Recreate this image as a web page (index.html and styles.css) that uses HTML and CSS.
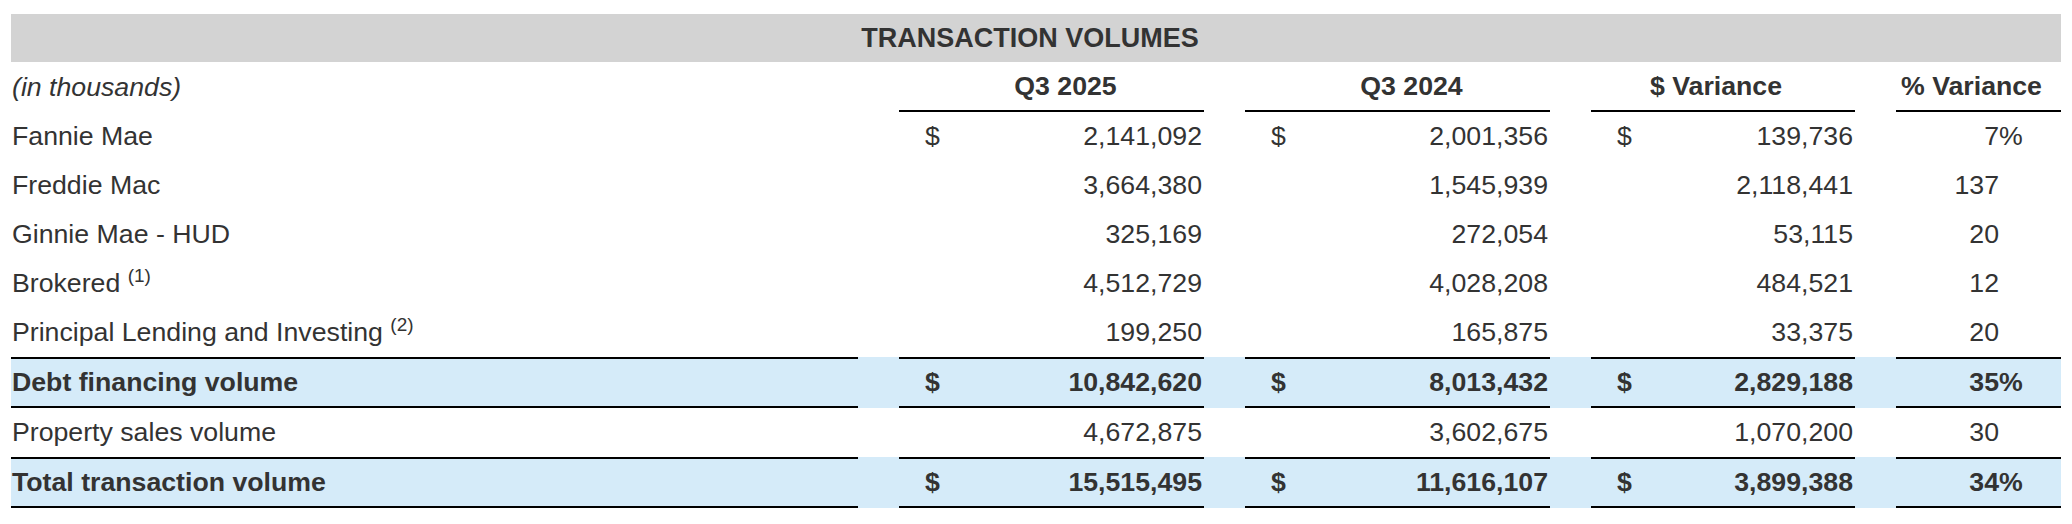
FILE: index.html
```html
<!DOCTYPE html>
<html lang="en">
<head>
<meta charset="utf-8">
<title>Transaction Volumes</title>
<link rel="stylesheet" href="styles.css">
</head>
<body>
<div class="page">
  <div class="title">TRANSACTION VOLUMES</div>

  <div class="row head">
    <div class="cell label italic">(in thousands)</div>
    <div class="cell colhead shift-r">Q3 2025</div>
    <div class="cell colhead shift-r">Q3 2024</div>
    <div class="cell colhead shift-l">$ Variance</div>
    <div class="cell colhead shift-l">% Variance</div>
  </div>

  <div class="row">
    <div class="cell label">Fannie Mae</div>
    <div class="cell num"><span>$</span><span>2,141,092</span></div>
    <div class="cell num"><span>$</span><span>2,001,356</span></div>
    <div class="cell num"><span>$</span><span>139,736</span></div>
    <div class="cell pctcell"><span>7</span><span class="pct">%</span></div>
  </div>

  <div class="row">
    <div class="cell label">Freddie Mac</div>
    <div class="cell num"><span></span><span>3,664,380</span></div>
    <div class="cell num"><span></span><span>1,545,939</span></div>
    <div class="cell num"><span></span><span>2,118,441</span></div>
    <div class="cell pctcell"><span>137</span><span class="pct"></span></div>
  </div>

  <div class="row">
    <div class="cell label">Ginnie Mae - HUD</div>
    <div class="cell num"><span></span><span>325,169</span></div>
    <div class="cell num"><span></span><span>272,054</span></div>
    <div class="cell num"><span></span><span>53,115</span></div>
    <div class="cell pctcell"><span>20</span><span class="pct"></span></div>
  </div>

  <div class="row">
    <div class="cell label"><span>Brokered <sup class="note">(1)</sup></span></div>
    <div class="cell num"><span></span><span>4,512,729</span></div>
    <div class="cell num"><span></span><span>4,028,208</span></div>
    <div class="cell num"><span></span><span>484,521</span></div>
    <div class="cell pctcell"><span>12</span><span class="pct"></span></div>
  </div>

  <div class="row">
    <div class="cell label"><span>Principal Lending and Investing <sup class="note">(2)</sup></span></div>
    <div class="cell num"><span></span><span>199,250</span></div>
    <div class="cell num"><span></span><span>165,875</span></div>
    <div class="cell num"><span></span><span>33,375</span></div>
    <div class="cell pctcell"><span>20</span><span class="pct"></span></div>
  </div>

  <div class="row total">
    <div class="cell label">Debt financing volume</div>
    <div class="cell num"><span>$</span><span>10,842,620</span></div>
    <div class="cell num"><span>$</span><span>8,013,432</span></div>
    <div class="cell num"><span>$</span><span>2,829,188</span></div>
    <div class="cell pctcell"><span>35</span><span class="pct">%</span></div>
  </div>

  <div class="row">
    <div class="cell label">Property sales volume</div>
    <div class="cell num"><span></span><span>4,672,875</span></div>
    <div class="cell num"><span></span><span>3,602,675</span></div>
    <div class="cell num"><span></span><span>1,070,200</span></div>
    <div class="cell pctcell"><span>30</span><span class="pct"></span></div>
  </div>

  <div class="row total">
    <div class="cell label">Total transaction volume</div>
    <div class="cell num"><span>$</span><span>15,515,495</span></div>
    <div class="cell num"><span>$</span><span>11,616,107</span></div>
    <div class="cell num"><span>$</span><span>3,899,388</span></div>
    <div class="cell pctcell"><span>34</span><span class="pct">%</span></div>
  </div>
</div>
</body>
</html>
```

FILE: styles.css
```css
html, body {
  margin: 0;
  padding: 0;
  background: #ffffff;
}

.page {
  padding: 14px 11px;
  font-family: "Liberation Sans", Arial, Helvetica, sans-serif;
  font-size: 26.7px;
  color: #333333;
}

.title {
  height: 48px;
  background: #d3d3d3;
  font-weight: bold;
  font-size: 27px;
  display: flex;
  align-items: center;
  justify-content: center;
  padding-right: 12px;
}

.row {
  display: grid;
  grid-template-columns: 847px 305px 305px 264px 165px;
  column-gap: 41px;
  height: 49px;
}

.row.head {
  height: 50px;
}

.row.total {
  height: 51px;
  background: #d5ebf9;
  font-weight: bold;
}

.cell {
  box-sizing: border-box;
  display: flex;
  align-items: center;
  white-space: nowrap;
}

.row.total .cell {
  border-top: 2px solid #000000;
  border-bottom: 2px solid #000000;
}

.label {
  padding-left: 1px;
}

.italic {
  font-style: italic;
}

.colhead {
  justify-content: center;
  font-weight: bold;
  border-bottom: 2px solid #000000;
}

.shift-r {
  padding-left: 28px;
}

.shift-l {
  padding-right: 14px;
}

.num {
  justify-content: space-between;
  padding: 0 2px 0 26px;
}

.pctcell {
  justify-content: flex-end;
  padding-right: 38px;
}

.pct {
  display: inline-block;
  width: 24px;
  text-align: left;
}

.note {
  font-size: 19px;
  vertical-align: 10px;
  line-height: 0;
}
```
